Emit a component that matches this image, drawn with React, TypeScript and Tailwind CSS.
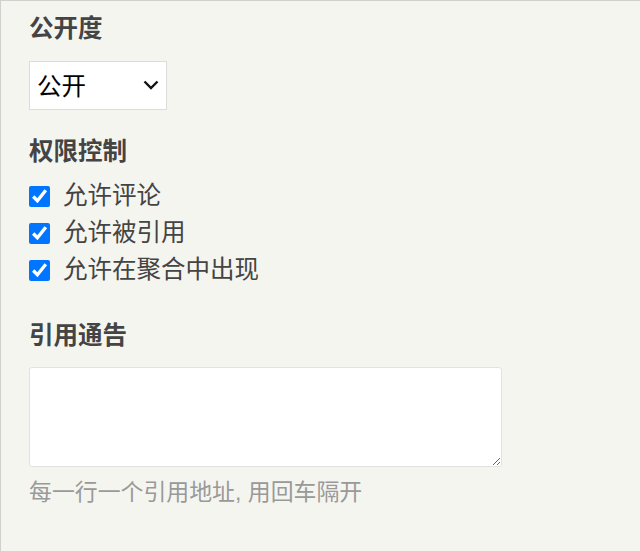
const Heading = ({ children }: { children: React.ReactNode }) => (
  <p className="text-[24.5px] leading-[36px] font-bold text-[#444]">{children}</p>
);

const CheckRow = ({ label }: { label: string }) => (
  <label className="flex items-center h-[37px] gap-[13px] text-[24.5px] text-[#444]">
    <input
      type="checkbox"
      defaultChecked
      className="w-[21px] h-[21px] m-0 accent-[#0075ff]"
    />
    <span>{label}</span>
  </label>
);

const App = () => (
  <div className="w-[640px] h-[551px] bg-[#f5f5f0] border-t border-l border-[#d0d0cc] overflow-hidden font-['Liberation_Sans','Noto_Sans_CJK_SC',sans-serif]">
    <div className="flex flex-col pl-[28px] pt-[10px]">
      <Heading>公开度</Heading>
      <div className="relative w-[138px] h-[49px] mt-[14px]">
        <select className="w-full h-full appearance-none bg-white border border-[#dcdcdc] pl-[7px] pt-[3px] text-[24.5px] text-black outline-none">
          <option>公开</option>
          <option>私密</option>
        </select>
        <svg
          className="absolute left-[114px] top-[19px] pointer-events-none"
          width="16"
          height="10"
          viewBox="0 0 16 10"
        >
          <path d="M1.5 1.5 L8 8 L14.5 1.5" fill="none" stroke="#111" strokeWidth="2.4" />
        </svg>
      </div>
      <div className="mt-[24px]">
        <Heading>权限控制</Heading>
      </div>
      <div className="flex flex-col mt-[8px]">
        <CheckRow label="允许评论" />
        <CheckRow label="允许被引用" />
        <CheckRow label="允许在聚合中出现" />
      </div>
      <div className="mt-[29px]">
        <Heading>引用通告</Heading>
      </div>
      <textarea className="mt-[13px] w-[473px] h-[100px] bg-white border border-[#e2e2e0] rounded-[3px] outline-none" />
      <p className="mt-[9px] text-[22.9px] leading-[33px] text-[#999]">
        每一行一个引用地址, 用回车隔开
      </p>
    </div>
  </div>
);

export default App;
